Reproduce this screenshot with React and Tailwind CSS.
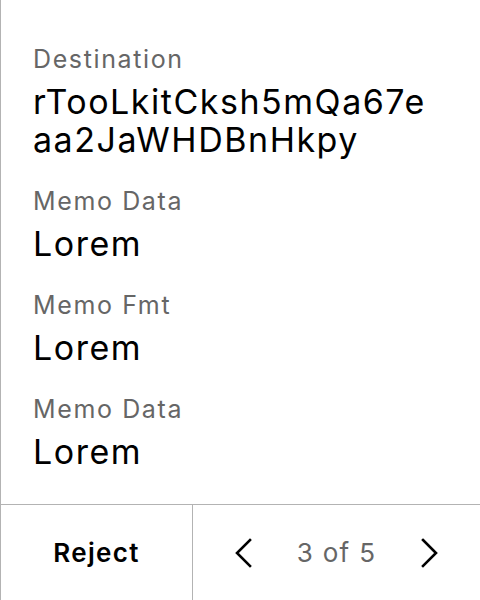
import React from 'react';

const fields = [
    { label: 'Destination', value: 'rTooLkitCksh5mQa67eaa2JaWHDBnHkpy' },
    { label: 'Memo Data', value: 'Lorem' },
    { label: 'Memo Fmt', value: 'Lorem' },
    { label: 'Memo Data', value: 'Lorem' },
];

const Chevron = ({ dir }) => (
    <svg width="20" height="32" viewBox="0 0 20 32" fill="none" stroke="#000" strokeWidth="2.6" strokeLinecap="square">
        {dir === 'left'
            ? <polyline points="17,3 4,16 17,29" />
            : <polyline points="3,3 16,16 3,29" />}
    </svg>
);

const App = () => {
    return (
        <div className="w-[480px] h-[600px] bg-white border-l border-[#b3b3b3] flex flex-col" style={{ fontFamily: 'Inter, "Noto Sans", sans-serif' }}>
            <div className="flex-1 pl-8 pr-[40px] pt-[43px] flex flex-col gap-[26px]">
                {fields.map((f, i) => (
                    <div key={i} className="flex flex-col gap-2">
                        <div className="text-[25px] leading-[32px] tracking-[0.065em] text-[#666666]">{f.label}</div>
                        <div className="text-[34px] leading-[38px] tracking-[0.045em] text-black break-all">{f.value}</div>
                    </div>
                ))}
            </div>
            <div className="h-[96px] border-t border-[#b3b3b3] flex">
                <button className="w-[192px] border-r border-[#b3b3b3] flex items-center justify-center text-[26px] font-semibold tracking-[0.05em] text-black">
                    Reject
                </button>
                <div className="flex-1 flex items-center justify-between px-[40px]">
                    <Chevron dir="left" />
                    <span className="text-[26px] tracking-[0.05em] text-[#666666]">3 of 5</span>
                    <Chevron dir="right" />
                </div>
            </div>
        </div>
    );
};

export default App;
